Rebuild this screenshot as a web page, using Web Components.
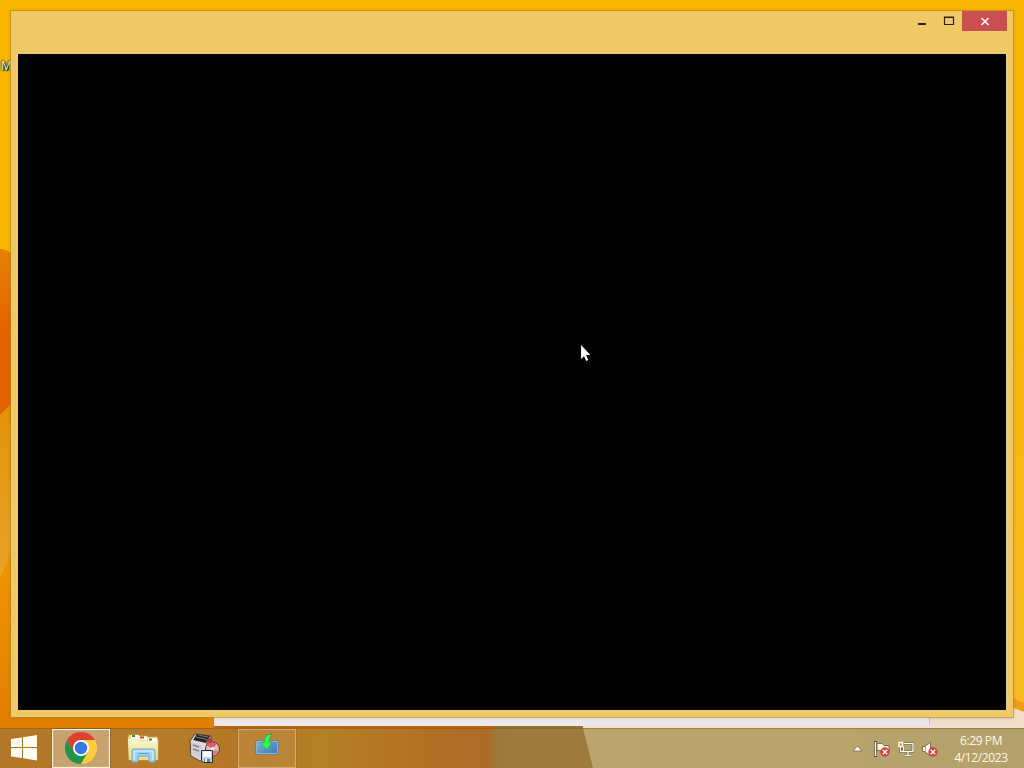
<!DOCTYPE html>
<html lang="en">
<head>
<meta charset="utf-8">
<title>Desktop</title>
<style>
  body {
    margin: 0;
    overflow: hidden;
    font-family: "Open Sans", "Noto Sans", sans-serif;
  }
</style>
</head>
<body>
<desk-top>
  <desk-wallpaper slot="wallpaper"></desk-wallpaper>
  <desk-label slot="icons">M</desk-label>
  <app-window></app-window>
  <task-bar slot="taskbar">
    <task-button kind="start">
      <svg width="26" height="26" viewBox="0 0 26 26" fill="#fffdf0"><path d="M0 4 11 2.4V12H0zM12 2.2 26 0v12H12zM0 13h11v10L0 21.6zM12 13h14v12.6L12 23.3z"/></svg>
    </task-button>
    <task-button kind="active">
      <svg width="32" height="32" viewBox="0 0 32 32">
        <path d="M2.14 8A16 16 0 0 1 29.86 8H16L9 20z" fill="#df4030"/>
        <path d="M2.14 8A16 16 0 0 0 16 32L23 20H9.07z" fill="#219647"/>
        <path d="M29.86 8A16 16 0 0 1 16 32L22.93 20 16 8z" fill="#fbce3b"/>
        <circle cx="16" cy="16" r="8" fill="#fff"/>
        <circle cx="16" cy="16" r="6.2" fill="#3578e5"/>
      </svg>
    </task-button>
    <task-button>
      <svg width="32" height="32" viewBox="0 0 32 32">
        <defs><linearGradient id="folder" x2="0" y2="1"><stop stop-color="#fbf7cd"/><stop offset="1" stop-color="#e6da84"/></linearGradient></defs>
        <path d="M1 6 2 3h9l1 1h8l1 1h9l1 3v20H2z" fill="#e9dc8c" stroke="#d0ba62" stroke-width=".6"/>
        <path d="M4 3h8v4H4zM12 4.500h8V8h-8zM21 6h9v3h-9z" fill="#fdfbea"/>
        <path d="M5 3h3v2H5z" fill="#21a03c"/>
        <path d="M13 4.500h4v2h-4z" fill="#d8412d"/>
        <path d="M22 6.500h3v2h-3z" fill="#2b83b9"/>
        <path d="M1 7h10l2 2h18l-1 19H2z" fill="url(#folder)"/>
        <path d="M5 30V19q0-2 2-2h19q2 0 2 2v11h-6v-6H11v6z" fill="#a3d6ee" stroke="#62a9cd"/>
        <path d="M7 19h19M7 19v9M26 19v9" stroke="#def5fb" fill="none"/>
        <path d="M11 21.500h11" stroke="#5b9fc9"/>
      </svg>
    </task-button>
    <task-button>
      <svg width="32" height="32" viewBox="0 0 32 32">
        <path d="m1 9 5-7 16 2v12l-7 12-4 1-9-5z" fill="#dedadb" stroke="#4b4243"/>
        <path d="m4 8 4-6 13 2-4 7z" fill="#25242a"/>
        <path d="m7 5 11 2.500M9 3l10 2" stroke="#77767c"/>
        <path d="m17 11 4-6 1 9-5 6z" fill="#a5605c"/>
        <path d="m2 10 11 3.500V28l-11-5z" fill="#d2cdd1"/>
        <path d="m4 13 6 2M4 17l6 2" stroke="#88818a" stroke-width="1.500"/>
        <path d="M18 9q4-4 5 3" fill="none" stroke="#c02c3c" stroke-width="2.500"/>
        <circle cx="23.500" cy="17" r="7" fill="#edb7ae" stroke="#56353b"/>
        <path d="m23.500 17-6-4q4-5 10-1z" fill="#d5616c"/>
        <path d="m23.500 17 6 2q-1 4-5 5z" fill="#d9838a"/>
        <circle cx="23.500" cy="17" r="2" fill="#fbe9dc"/>
        <path d="M12.500 18.500h11v12h-9l-2-2z" fill="#bdd3df" stroke="#1c3344"/>
        <path d="M14 19.500h8V25h-8z" fill="#fff"/><path d="M15 27h6v3h-6z" fill="#5f7d95"/><path d="M16 27h2v3h-2z" fill="#eef4f6"/>
      </svg>
    </task-button>
    <task-button kind="open">
      <svg width="32" height="32" viewBox="0 0 32 32">
        <defs><linearGradient id="screen" x2="1" y2="1"><stop stop-color="#8cb9d8"/><stop offset="1" stop-color="#3473b5"/></linearGradient></defs>
        <path d="M4.500 8.500h23v14h-23z" fill="url(#screen)" stroke="#7b8378"/>
        <path d="M5.500 9.500h21v12h-21z" fill="none" stroke="#8bb7da"/>
        <path d="M21 2q-8 0-8 8.500l-3.500.5 6.500 7 5.500-8-3.500.5Q18 6 21 2z" fill="#3df05a" stroke="#20b143" stroke-width=".9"/>
      </svg>
    </task-button>
    <system-tray slot="tray">
      <tray-icon>
        <svg width="16" height="16" viewBox="0 0 16 16"><path d="m3 10 4.500-5 4.500 5z" fill="#fff8e6" stroke="#786340" stroke-width=".7"/></svg>
      </tray-icon>
      <tray-icon error>
        <svg width="16" height="16" viewBox="0 0 16 16"><path d="M1.500 0v16" stroke="#5c4d32" stroke-width="3"/><path d="M1.500 1v14" stroke="#fffbea" stroke-width="1.500"/><path d="M3 2.500h5l2 2h5v6h-5l-2-1H3z" fill="#fff7e2" stroke="#6b5938" stroke-width=".8"/></svg>
      </tray-icon>
      <tray-icon>
        <svg width="16" height="16" viewBox="0 0 16 16" fill="none"><path d="M6 2.500h9v8H5v-5M10 11v3M6.500 14.500h7M2.500 6v4.500h4" stroke="#554629" stroke-width="2.600"/><path d="M6 2.500h9v8H5.500v-5M10 11v3M6.500 14.500h7M2.500 6v4.500h3M1 1.500h3.500v4H1z" stroke="#fff9e7" stroke-width="1.400"/></svg>
      </tray-icon>
      <tray-icon error>
        <svg width="16" height="16" viewBox="0 0 16 16"><path d="M.5 5.500h2.500L8.500 1v14L3 10.500H.5z" fill="#fffbed" stroke="#6b5938" stroke-width=".8"/><path d="M3.500 5v6M10.500 4q2 2 2 4" fill="none" stroke="#b6a786"/></svg>
      </tray-icon>
      <span slot="time">6:29 PM</span>
      <span slot="date">4/12/2023</span>
    </system-tray>
  </task-bar>
  <mouse-pointer slot="pointer"></mouse-pointer>
</desk-top>

<script>
function define(name, html) {
  const template = document.createElement('template');
  template.innerHTML = html;
  customElements.define(name, class extends HTMLElement {
    constructor() {
      super();
      this.attachShadow({ mode: 'open' });
      this.shadowRoot.appendChild(template.content.cloneNode(true));
    }
  });
}

define('desk-top', `
  <style>
    :host {
      display: grid;
      grid-template-rows: 1fr 40px;
      position: relative;
      width: 1024px;
      height: 768px;
      overflow: hidden;
    }
    main {
      position: relative;
      box-sizing: border-box;
      padding: 11px;
    }
    slot[name="taskbar"] { display: block; position: relative; }
  </style>
  <slot name="wallpaper"></slot>
  <main><slot name="icons"></slot><slot></slot></main>
  <slot name="taskbar"></slot>
  <slot name="pointer"></slot>
`);

define('desk-wallpaper', `
  <style>
    :host { display: block; position: absolute; inset: 0; }
    svg { display: block; }
  </style>
  <svg width="1024" height="768">
    <defs>
      <linearGradient id="sky" x2="0" y2="1"><stop stop-color="#fbb700"/><stop offset=".35" stop-color="#f9b706"/><stop offset=".9" stop-color="#f6bd22"/></linearGradient>
      <linearGradient id="red" x2="0" y2="1"><stop stop-color="#e58205"/><stop offset=".45" stop-color="#e56400"/><stop offset="1" stop-color="#e36100"/></linearGradient>
      <linearGradient id="low" x2="0" y2="1"><stop stop-color="#e59305"/><stop offset="1" stop-color="#e7a42c"/></linearGradient>
      <linearGradient id="foot" x2="0" y2="1"><stop stop-color="#ee9a00"/><stop offset="1" stop-color="#df7800"/></linearGradient>
    </defs>
    <path fill="url(#sky)" d="M0 0h1024v768H0z"/>
    <path fill="url(#red)" d="M0 249q7 0 12 5v154L0 418z"/>
    <path fill="url(#low)" d="M0 415 12 403v180H0z"/>
    <path fill="url(#foot)" d="M0 578 12 548v166h230v54H0z"/>
    <path fill="#efddcb" d="M930 716h84l10-6v18h-94z"/>
    <path fill="#f09b1c" d="m1013 698 11 5v9l-11-5z"/>
    <path fill="#f1e0c7" d="m1013 708 11 4v16h-11z"/>
    <path fill="#ece8ec" d="M214 717h716v9H214z"/>
    <path fill="#f3dfcc" d="M583 726h441v2H583z"/>
    <path fill="#b8640f" d="M214 726h280v2H214z"/>
    <path fill="#927333" d="M494 726h89v2h-89z"/>
    <path stroke="#c7bec1" d="M929.500 717v8"/>
  </svg>
`);

define('desk-label', `
  <style>
    :host {
      position: absolute;
      left: 1px;
      top: 58px;
      color: #fff;
      font-size: 12px;
      line-height: 16px;
      text-shadow: 0 0 2px #000, 1px 1px 1px #000, 0 0 2px #000;
    }
  </style>
  <slot></slot>
`);

define('app-window', `
  <style>
    :host {
      display: flex;
      flex-direction: column;
      position: relative;
      box-sizing: border-box;
      width: 1002px;
      height: 706px;
      padding: 0 7px 7px;
      background: #efc968;
      box-shadow: 0 0 0 1px #b58a2c99, 0 0 3px 1px #8a620044;
    }
    header { display: flex; justify-content: flex-end; height: 43px; flex: none; }
    .btn { display: flex; align-items: center; justify-content: center; width: 27px; height: 20px; }
    .close { width: 45px; margin-right: -1px; background: #c94f50; }
    .view { flex: 1; background: #000; }
  </style>
  <header>
    <div class="btn"><svg width="12" height="12"><path d="M2 8h8v2H2z" fill="#3d1c04"/></svg></div>
    <div class="btn"><svg width="12" height="12"><path d="M1.500 2.500h9v7h-9zM1 2h10" fill="none" stroke="#3d1c04" stroke-width="1.200"/></svg></div>
    <div class="btn close"><svg width="10" height="10"><path d="m1.500 2 7 7m0-7-7 7" stroke="#fff8ec" stroke-width="1.700"/></svg></div>
  </header>
  <div class="view"></div>
`);

define('task-bar', `
  <style>
    :host {
      display: flex;
      position: relative;
      box-sizing: border-box;
      height: 40px;
      background: linear-gradient(90deg, #b1782a, #b77b2c 180px, #b27523 260px, #b38127 320px, #b37424 400px, #ad6b26 488px, #9b7b3d 497px, #9e7a40 600px);
    }
    .light {
      position: absolute;
      inset: 0;
      background: linear-gradient(90deg, #bba56d 580px, #b8a36d 850px, #b4a06a);
      clip-path: polygon(583px 0, 100% 0, 100% 100%, 593px 100%);
    }
    .edge { position: absolute; inset: 0 0 auto; height: 1px; background: #7b4b1366; }
    nav { display: flex; position: relative; }
    .tray { margin-left: auto; position: relative; }
  </style>
  <div class="light"></div>
  <div class="edge"></div>
  <nav><slot></slot></nav>
  <div class="tray"><slot name="tray"></slot></div>
`);

define('task-button', `
  <style>
    :host {
      display: flex;
      align-items: center;
      justify-content: center;
      box-sizing: border-box;
      width: 58px;
      height: 39px;
      margin: 1px 2px 0;
      border: 1px solid transparent;
    }
    slot { display: block; margin-top: -1px; }
    ::slotted(svg) { display: block; }
    :host([kind="start"]) { width: 48px; margin: 1px 2px 0 0; }
    :host([kind="active"]) {
      border-color: #fff4d7;
      background: #c8a171;
      box-shadow: 0 0 0 1px #7b5a2466, inset 0 0 0 1px #cfaa7a;
    }
    :host([kind="open"]) {
      border-color: #d4ad6c;
      background: #c08e4399;
      box-shadow: 0 0 0 1px #8f602644;
    }
  </style>
  <slot></slot>
`);

define('system-tray', `
  <style>
    :host { display: flex; height: 40px; }
    .icons { display: flex; gap: 8px; align-items: center; padding-top: 1px; }
    .clock {
      display: flex;
      flex-direction: column;
      width: 56px;
      margin: 4px 15px 0 15px;
      color: #fff9e9;
      font-size: 12px;
      line-height: 17px;
      letter-spacing: -.4px;
      text-align: center;
      white-space: nowrap;
    }
  </style>
  <div class="icons"><slot></slot></div>
  <div class="clock"><slot name="time"></slot><slot name="date"></slot></div>
`);

define('tray-icon', `
  <style>
    :host { display: block; position: relative; width: 16px; height: 16px; }
    ::slotted(svg) { display: block; }
    .error { display: none; position: absolute; left: 6px; top: 6px; }
    :host([error]) .error { display: block; }
  </style>
  <slot></slot>
  <svg class="error" width="10" height="10"><circle cx="5" cy="5" r="4.700" fill="#cf4543"/><path d="m2.800 2.800 4.400 4.400m0-4.400-4.400 4.400" stroke="#fff" stroke-width="1.300"/></svg>
`);

define('mouse-pointer', `
  <style>
    :host { display: block; position: absolute; left: 580px; top: 344px; }
  </style>
  <svg width="12" height="19"><path d="M1 1v14l3-2.800 2.300 4.800 2-1L6 11h4.500z" fill="#fff"/></svg>
`);
</script>
</body>
</html>
